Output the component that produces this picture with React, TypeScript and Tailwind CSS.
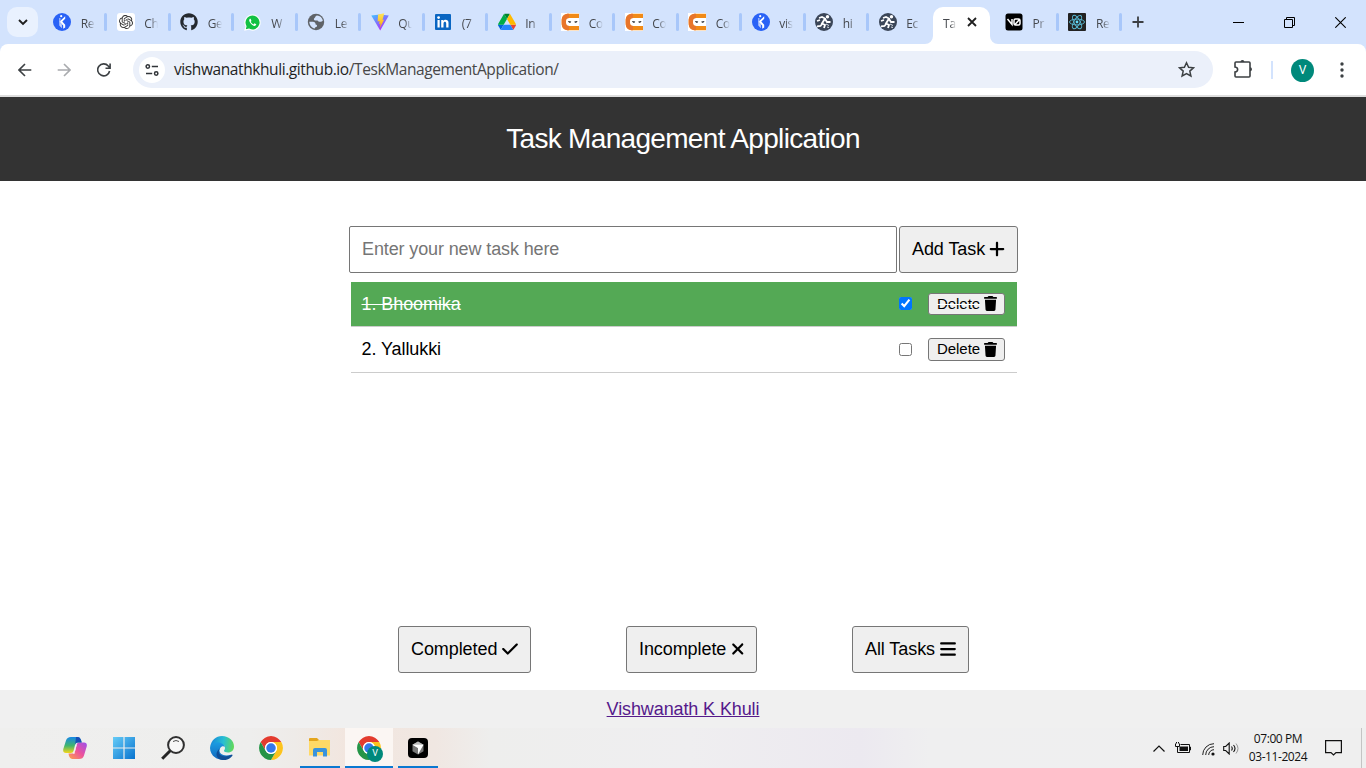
import React from "react";
import { FaBars, FaCheck, FaPlus, FaTrash, FaXmark, FaGithub, FaWhatsapp } from "react-icons/fa6";
import { SiOpenai } from "react-icons/si";

function BlueFigure() {
  return (
    <svg className="size-[18px]" viewBox="0 0 18 18">
      <circle cx="9" cy="9" r="9" fill="#2962f6" />
      <circle cx="8.200" cy="3.200" r="1.100" fill="#fff" />
      <path d="M12.200 3.200v2.500L9.300 8.600l2.900 3.200v2.600l-2 1.400v-3.300L6.400 8.700Z" fill="#fff" />
      <path d="M6.300 5v7.500l2.600 2.800v-3.700l-1.500-1.500V5Z" fill="#bfd0fd" />
    </svg>
  );
}

function OpenAiIcon() {
  return (
    <span className="flex size-[18px] items-center justify-center rounded-[3px] bg-white text-[#333]">
      <SiOpenai size={14} />
    </span>
  );
}

function WhatsappIcon() {
  return (
    <span className="flex size-[18px] items-center justify-center">
      <svg className="size-[17px]" viewBox="0 0 18 18">
        <path d="M9 1a8 8 0 1 1-3.800 15L1 17l1.100-4A8 8 0 0 1 9 1Z" fill="#12c143" stroke="#fff" strokeWidth="1.200" />
        <path d="M6.200 5c-1 .8-1 2.200.2 4 1.600 2.400 3.300 3.600 4.800 3.600 1 0 1.800-.8 1.800-1.700l-2-1-1 1.100C8.600 10.400 7.700 9.500 7.100 8.300l.8-1L7 5Z" fill="#fff" />
      </svg>
    </span>
  );
}

function GlobeIcon() {
  return (
    <svg className="size-[18px]" viewBox="0 0 18 18">
      <circle cx="9" cy="9" r="8.200" fill="#5f6368" />
      <path d="M10 2.500c-2 .5-1.500 1.800-2.500 2.500s-.8 2.500.8 2.500h2.200c.8 1.200 1.800 1.500 3.500 1.200.8-.3 1.500-.5 1.800-1C15.500 5 13 2.600 10 2.500Z" fill="#d3e3fd" />
      <path d="M2.300 8.800h3.600c1.800 0 2.700 1 2.700 2.600 1.400.3 1.800 1.200 1.200 2.200-.7.700-1.900.5-2 1.900C4.800 15 2.500 12.500 2.300 8.800Z" fill="#d3e3fd" />
    </svg>
  );
}

function ViteIcon() {
  return (
    <svg className="size-[18px]" viewBox="0 0 18 18">
      <defs>
        <linearGradient id="vite-a" x1="0" y1="0" x2="0.6" y2="1">
          <stop offset="0" stopColor="#41c5ff" />
          <stop offset="1" stopColor="#b52bfd" />
        </linearGradient>
        <linearGradient id="vite-b" x1="0" y1="0" x2="0" y2="1">
          <stop offset="0" stopColor="#ffe45a" />
          <stop offset="1" stopColor="#ffa800" />
        </linearGradient>
      </defs>
      <path d="M.3 2.500 9 1.500l8.800 1L9.200 17.600Z" fill="url(#vite-a)" />
      <path d="m13.300.3-6.200 1.200-.5 6.900 2-.4-.5 3 1.500-.4-.8 4.500 4.400-8.500-1.700.3Z" fill="url(#vite-b)" />
    </svg>
  );
}

function LinkedinIcon() {
  return (
    <svg className="size-[18px]" viewBox="0 0 18 18">
      <rect x="1" y="1" width="16" height="16" rx="1" fill="#0a66c2" />
      <circle cx="4.600" cy="4.600" r="1.400" fill="#fff" />
      <path d="M3.500 7h2.200v7.500H3.500zM7.200 7h2.100v1c1.100-1.800 5.200-1.800 5.200 1.800v4.700h-2.300v-4.100c0-2.200-2.700-2-2.700 0v4.100H7.200Z" fill="#fff" />
    </svg>
  );
}

function DriveIcon() {
  return (
    <svg className="size-[18px]" viewBox="0 0 87.3 87.3">
      <g transform="translate(0 4)">
        <path d="m6.600 66.850 3.850 6.650c.8 1.400 1.950 2.500 3.300 3.300l13.750-23.800H0c0 1.550.4 3.100 1.200 4.500Z" fill="#0066da" />
        <path d="M43.650 25 29.900 1.200c-1.350.8-2.500 1.900-3.300 3.300L1.200 48.500A9 9 0 0 0 0 53h27.500Z" fill="#00ac47" />
        <path d="M73.550 76.800c1.350-.8 2.500-1.900 3.300-3.300l9.250-16c.8-1.400 1.200-2.950 1.200-4.500H59.800Z" fill="#ea4335" />
        <path d="M43.650 25 57.400 1.200C56.050.4 54.500 0 52.900 0H34.400c-1.600 0-3.150.45-4.500 1.200Z" fill="#00832d" />
        <path d="M59.800 53H27.500L13.750 76.800c1.350.8 2.900 1.200 4.500 1.200h50.800c1.600 0 3.150-.45 4.500-1.200Z" fill="#2684fc" />
        <path d="m73.400 26.500-12.700-22c-.8-1.400-1.950-2.500-3.300-3.300L43.650 25 59.800 53h27.450c0-1.550-.4-3.100-1.200-4.500Z" fill="#ffba00" />
      </g>
    </svg>
  );
}

function CodingNinjasIcon() {
  return (
    <svg className="size-[18px]" viewBox="0 0 18 18">
      <path d="M0 0h18v18H0z" fill="#fff" />
      <path d="M18 .7H8C3 .7.700 3 .700 8v2c0 5 2.300 7.300 7.300 7.300h10V13H8.500C6 13 5 12 5 9.800V8c0-2.200 1-3 3.500-3H18Z" fill="#f18a16" />
      <path d="M.7 8C.7 3 3 .7 8 .7v4.300C5.900 5.200 5 6 5 8v2c0 2 1 3 3 3v4.300C3 17.300.700 15 .700 10Z" fill="#e8752b" />
      <path d="m7 8 3.200.5c-.3 1.700-2.500 1.900-3.200-.5Zm9.500 0-3.200.5c.3 1.700 2.500 1.900 3.200-.5Z" fill="#25292f" />
    </svg>
  );
}

function RunnerIcon() {
  return (
    <svg className="size-[18px]" viewBox="0 0 18 18">
      <circle cx="9" cy="9" r="9" fill="#3b4658" />
      <circle cx="12.500" cy="3.800" r="1.700" fill="#fff" />
      <path d="m4 5 3-1 3 1.500-3 5 3 1.500-1 3M7.500 10.500 5.500 13l-3.500.3M10 6l2 3h3.500M2 8l3-1" fill="none" stroke="#fff" strokeWidth="1.800" />
      <path d="m11 11 3 1.500M12 14l2 .5" stroke="#d8dde4" />
    </svg>
  );
}

function V0Icon() {
  return (
    <svg className="size-[18px]" viewBox="0 0 18 18">
      <rect x=".5" y=".5" width="17" height="17" rx="2.500" fill="#000" />
      <path d="m2.500 6 4.500 5.500V6M9 7.500v3q0 1.500 1.500 1.500h3q1.500 0 1.500-1.500v-3q0-1.500-1.500-1.500h-3Q9 6 9 7.500ZM10 11.500l4.500-5" fill="none" stroke="#fff" strokeWidth="1.500" />
    </svg>
  );
}

function ReactLogo() {
  return (
    <svg className="size-[18px]" viewBox="0 0 18 18">
      <rect width="18" height="18" rx="1" fill="#222" />
      <g fill="none" stroke="#58b9d3" strokeWidth=".9">
        <ellipse cx="9" cy="9" rx="7.500" ry="2.900" />
        <ellipse cx="9" cy="9" rx="7.500" ry="2.900" transform="rotate(60 9 9)" />
        <ellipse cx="9" cy="9" rx="7.500" ry="2.900" transform="rotate(120 9 9)" />
      </g>
      <circle cx="9" cy="9" r="1.400" fill="#61dafb" />
    </svg>
  );
}

const tabsBefore: { icon: React.ReactNode; label: string }[] = [
  { icon: <BlueFigure />, label: "Re" },
  { icon: <OpenAiIcon />, label: "Ch" },
  { icon: <FaGithub size={18} color="#24292f" />, label: "Ge" },
  { icon: <WhatsappIcon />, label: "W" },
  { icon: <GlobeIcon />, label: "Le" },
  { icon: <ViteIcon />, label: "Qu" },
  { icon: <LinkedinIcon />, label: "(7" },
  { icon: <DriveIcon />, label: "In" },
  { icon: <CodingNinjasIcon />, label: "Co" },
  { icon: <CodingNinjasIcon />, label: "Co" },
  { icon: <CodingNinjasIcon />, label: "Co" },
  { icon: <BlueFigure />, label: "vis" },
  { icon: <RunnerIcon />, label: "hi" },
  { icon: <RunnerIcon />, label: "Ec" },
];

const tabsAfter: { icon: React.ReactNode; label: string }[] = [
  { icon: <V0Icon />, label: "Pr" },
  { icon: <ReactLogo />, label: "Re" },
];

function Tab({ icon, label, divider = true }: { icon: React.ReactNode; label: string; divider?: boolean }) {
  return (
    <div className="flex h-full w-[63.5px] shrink-0 items-center">
      <span className="flex w-[18px] shrink-0">{icon}</span>
      <span className="ml-[9.5px] w-[14px] shrink-0 pt-[3px] text-xs tracking-[-0.3px] whitespace-nowrap text-[#45484d] [mask-image:linear-gradient(to_right,#000_45%,transparent)]">
        {label}
      </span>
      <span className={divider ? "ml-[9.5px] h-[18px] w-[3px] shrink-0 rounded-full bg-[#a8c7fa]" : "hidden"} />
    </div>
  );
}

function TabStrip() {
  return (
    <div className="flex h-11 shrink-0 items-center bg-[#d3e3fd]">
      <div className="ml-[7px] flex h-[30px] w-[31px] shrink-0 items-center justify-center rounded-[10px] bg-[#e9f1fe]">
        <svg className="size-3" viewBox="0 0 12 12">
          <path d="m2 4 4 4 4-4" fill="none" stroke="#1f1f1f" strokeWidth="1.900" />
        </svg>
      </div>
      <div className="ml-[15.200px] flex h-full w-[879.800px] items-center">
        {tabsBefore.map((t, i) => (
          <Tab key={i} icon={t.icon} label={t.label} divider={i < tabsBefore.length - 1} />
        ))}
      </div>
      <div className="relative mt-[7px] flex h-[37px] w-[57px] shrink-0 items-center rounded-t-[10px] bg-white pl-[10px]">
        <svg className="absolute bottom-0 -left-2 size-2" viewBox="0 0 8 8">
          <path d="M8 0v8H0a8 8 0 0 0 8-8" fill="#fff" />
        </svg>
        <svg className="absolute -right-2 bottom-0 size-2" viewBox="0 0 8 8">
          <path d="M0 0v8h8a8 8 0 0 1-8-8" fill="#fff" />
        </svg>
        <span className="-mt-1 w-[13px] text-xs whitespace-nowrap text-[#45484d] [mask-image:linear-gradient(to_right,#000_60%,transparent)]">Ta</span>
        <svg className="-mt-[7px] ml-[11px] size-[10px]" viewBox="0 0 10 10">
          <path d="m1 1 8 8M9 1 1 9" stroke="#1f1f1f" strokeWidth="1.800" />
        </svg>
      </div>
      <div className="ml-[15px] flex h-full w-[127px] items-center">
        {tabsAfter.map((t, i) => (
          <Tab key={i} icon={t.icon} label={t.label} />
        ))}
      </div>
      <svg className="size-3 shrink-0" viewBox="0 0 12 12">
        <path d="M6 .5v11M.5 6h11" stroke="#3c3f43" strokeWidth="1.800" />
      </svg>
      <div className="ml-auto flex items-center gap-10 pr-5">
        <svg className="h-[11px] w-[11px]" viewBox="0 0 11 11" shapeRendering="crispEdges">
          <path d="M0 5.500h11" stroke="#000" />
        </svg>
        <svg className="h-[11px] w-[11px]" viewBox="0 0 11 11">
          <path d="M.5 2.500h8v8h-8zM2.500 2.500v-2h8v8h-2" fill="none" stroke="#000" />
        </svg>
        <svg className="h-[11px] w-[11px]" viewBox="0 0 11 11">
          <path d="m.3.300 10.400 10.400M10.700.300.300 10.700" stroke="#000" strokeWidth="1.100" />
        </svg>
      </div>
    </div>
  );
}

function Toolbar() {
  return (
    <div className="flex h-[53px] shrink-0 bg-[#d3e3fd]">
      <div className="flex w-full items-center rounded-t-lg border-b-2 border-[#dedede] bg-white">
        <svg className="ml-[18px] size-[14px]" viewBox="0 0 14 14">
          <path d="M13.300 7H1M7 1 1 7l6 6" fill="none" stroke="#3c4043" strokeWidth="1.600" />
        </svg>
        <svg className="ml-[25px] size-[14px]" viewBox="0 0 14 14">
          <path d="M.7 7H13M7 1l6 6-6 6" fill="none" stroke="#a9abae" strokeWidth="1.600" />
        </svg>
        <svg className="ml-[26px] size-[14px]" viewBox="0 0 14 14">
          <path d="M12.600 8A6 6 0 1 1 11.300 3L13 4.900M13.100.6v4.700H8.500" fill="none" stroke="#3c4043" strokeWidth="1.600" />
        </svg>
        <div className="ml-[22px] flex h-[37px] w-[1080px] items-center rounded-full bg-[#ebf0fa]">
          <div className="ml-[6px] flex size-[26px] items-center justify-center rounded-full bg-white">
            <svg className="h-3 w-[14px]" viewBox="0 0 14 12">
              <g fill="none" stroke="#303438" strokeWidth="1.500">
                <circle cx="2.800" cy="2.500" r="1.700" />
                <path d="M6.800 2.500H13M1 9.500h6.200" />
                <circle cx="11.200" cy="9.500" r="1.700" />
              </g>
            </svg>
          </div>
          <span className="ml-[9px] text-[15.500px] leading-none tracking-[-0.410px] whitespace-nowrap text-[#474747]">
            <span className="text-[#1f1f1f]">vishwanathkhuli.github.io</span>/TeskManagementApplication/
          </span>
          <svg className="mr-[18px] ml-auto size-[17px]" viewBox="0 0 17 17">
            <path d="m8.500 1.800 2.100 4.500 4.900.5-3.700 3.300 1.100 4.900-4.400-2.500-4.400 2.500 1.100-4.900-3.700-3.300 4.900-.5Z" fill="none" stroke="#3c4043" strokeWidth="1.500" />
          </svg>
        </div>
        <svg className="-mt-px ml-5 size-[20px]" viewBox="0 0 20 20">
          <path d="M3 3h13q1 0 1 1v13q0 1-1 1H3q-1 0-1-1v-4c3.500-.5 3.500-4.500 0-5V4q0-1 1-1Z" fill="none" stroke="#3c4043" strokeWidth="1.600" />
          <path d="M7.400 3a2 2 0 0 1 4 0M17 8.300a2 2 0 0 1 0 4" fill="#3c4043" />
        </svg>
        <span className="ml-[18px] h-[18px] w-[2px] bg-[#d3e3fd]" />
        <span className="mt-px ml-[18px] flex size-[23px] items-center justify-center rounded-full bg-[#00897b] font-['Roboto',sans-serif] text-xs text-white">V</span>
        <svg className="ml-[24px] h-4 w-4" viewBox="0 0 16 16">
          <g fill="#3c4043">
            <circle cx="4" cy="2" r="1.700" />
            <circle cx="4" cy="8" r="1.700" />
            <circle cx="4" cy="14" r="1.700" />
          </g>
        </svg>
      </div>
    </div>
  );
}

const buttonClass =
  "flex h-[47px] items-center justify-between rounded-[3px] border border-[#767676] bg-[#efefef] px-3 text-[18px] tracking-[-0.080px] text-black whitespace-nowrap";

function TaskRow({ text, done }: { text: string; done: boolean }) {
  return (
    <li
      className={
        done
          ? "flex h-[45px] items-center border-b border-[#ccc] bg-[#54a955] pr-3 pl-[10.5px] text-white line-through"
          : "flex h-[46px] items-center border-b border-[#ccc] pr-3 pl-[10.5px] text-black"
      }
    >
      <span className="text-[18px] tracking-[-0.080px]">{text}</span>
      <input type="checkbox" defaultChecked={done} className="mr-[16px] mb-px ml-auto size-[13px]" />
      <button
        className={
          (done ? "h-[22px]" : "h-[23px]") +
          " flex w-[77px] items-center justify-between rounded-[3px] border border-[#767676] bg-[#efefef] pr-[7px] pl-2 text-[15px] tracking-[-0.050px] text-black"
        }
      >
        <span className={done ? "line-through decoration-white" : ""}>Delete</span>
        <FaTrash className="mb-px h-[15px] w-[13px]" />
      </button>
    </li>
  );
}

function TaskApp() {
  return (
    <div className="flex h-[631px] shrink-0 flex-col bg-white font-['Liberation_Sans',Arial,sans-serif]">
      <header className="flex h-[84px] items-center justify-center bg-[#333] text-[28px] tracking-[-0.680px] text-white">
        Task Management Application
      </header>
      <main className="flex flex-1 flex-col">
        <div className="mt-[45px] ml-[349px] flex gap-[2px]">
          <input
            placeholder="Enter your new task here"
            className="h-[47px] w-[548px] rounded-[2px] border border-[#767676] px-3 text-[18px] tracking-[-0.120px] placeholder:text-[#757575]"
          />
          <button className={buttonClass + " w-[119px]"}>
            Add Task <FaPlus className="mb-[2px] h-[18px] w-[16px] shrink-0" />
          </button>
        </div>
        <ul className="mt-[9px] ml-[351px] w-[666px]">
          <TaskRow text="1. Bhoomika" done />
          <TaskRow text="2. Yallukki" done={false} />
        </ul>
        <div className="mt-auto mb-[17px] flex gap-[95px] pl-[398px]">
          <button className={buttonClass + " w-[133px]"}>
            Completed <FaCheck className="mb-[2px] h-[18px] w-[16px] shrink-0" />
          </button>
          <button className={buttonClass + " w-[131px]"}>
            Incomplete <FaXmark className="mb-[2px] h-[18px] w-[13.5px] shrink-0" />
          </button>
          <button className={buttonClass + " w-[117px]"}>
            All Tasks <FaBars className="mb-[2px] h-[18px] w-[16px] shrink-0" />
          </button>
        </div>
      </main>
      <footer className="flex h-[38px] items-center justify-center bg-[#f0f0f0] text-[18px] tracking-[-0.110px]">
        <a href="#" className="text-[#551a8b] underline">Vishwanath K Khuli</a>
      </footer>
    </div>
  );
}

function CopilotIcon() {
  return (
    <svg className="size-[24px]" viewBox="0 0 24 24">
      <defs>
        <linearGradient id="cop-a" x1="0" y1="0" x2="0" y2="1">
          <stop offset="0" stopColor="#1688e8" />
          <stop offset=".55" stopColor="#42b66b" />
          <stop offset="1" stopColor="#f6d619" />
        </linearGradient>
        <linearGradient id="cop-b" x1="1" y1="0" x2="0" y2="1">
          <stop offset="0" stopColor="#9b50ed" />
          <stop offset=".5" stopColor="#ec529d" />
          <stop offset="1" stopColor="#ffa347" />
        </linearGradient>
      </defs>
      <path d="M8 1h7q2 0 3 3l.7 2.500h-4q-2 0-2.700 2.500l-1.500 6q-.5 2-2.500 2H3q-3.500 0-2.700-4L3 4.500Q4 1 8 1Z" fill="url(#cop-a)" />
      <path d="M16 23H9q-2 0-3-3l-.5-2.500h3.800q2 0 2.700-2.500l1.500-6q.5-2.500 2.500-2.500h5q3.500 0 2.700 4L21 19.500Q20 23 16 23Z" fill="url(#cop-b)" />
      <path d="M13 1h2q2 0 3 3l.7 2.500h-4q-1.700 0-2.500 2Z" fill="#174fb7" />
      <path d="m14 8-2.700 10H9.500q1.500-.5 2-2.500l1.500-6Z" fill="#fff" />
    </svg>
  );
}

function WindowsIcon() {
  return (
    <svg className="size-[22px]" viewBox="0 0 22 22">
      <defs>
        <linearGradient id="win-a" x1="0" y1="0" x2="1" y2="1">
          <stop offset="0" stopColor="#66ccf7" />
          <stop offset="1" stopColor="#0873cf" />
        </linearGradient>
      </defs>
      <path d="M0 0h10.400v10.400H0zM11.600 0H22v10.400H11.600zM0 11.600h10.400V22H0zM11.600 11.600H22V22H11.600z" fill="url(#win-a)" />
    </svg>
  );
}

function SearchIcon() {
  return (
    <svg className="size-[24px]" viewBox="0 0 24 24">
      <circle cx="15" cy="9" r="7.900" fill="#f7f7f7" stroke="#303030" strokeWidth="2" />
      <path d="m9.200 14.800-8 8" stroke="#252525" strokeWidth="3" />
      <path d="M12 5.500q3-2 6 0" fill="none" stroke="#505050" strokeWidth="1" />
    </svg>
  );
}

function EdgeIcon() {
  return (
    <svg className="size-[24px]" viewBox="0 0 24 24">
      <defs>
        <linearGradient id="edge-a" x1="0" y1=".4" x2="1" y2=".5">
          <stop offset="0" stopColor="#1687d9" />
          <stop offset=".55" stopColor="#28bfd3" />
          <stop offset="1" stopColor="#62d957" />
        </linearGradient>
        <linearGradient id="edge-b" x1="0" y1="0" x2="0" y2="1">
          <stop offset="0" stopColor="#1b9de2" />
          <stop offset="1" stopColor="#1267bd" />
        </linearGradient>
      </defs>
      <path d="M.1 11.200C1.200 4.300 6 0 12 0c7.200 0 12 5.200 12 10.500 0 3.700-2.600 6-6 6-2.500 0-4-.8-4-1.700 0-.6 1-1 1-2.800 0-2.300-2.200-4.500-6-4.500-4 0-7.500 1.500-8.900 3.700Z" fill="url(#edge-a)" />
      <path d="M.1 11.200C1.500 7 5.500 5.600 9.500 6.500c3 .7 4.800 2.500 5.400 4.400-1.200-1.100-3.500-1-4.600 1-2.700 4.800 2 9.700 11.700 6.500-4 6-11.800 6.800-16.800 3.200C1.500 19-.3 15 .1 11.200Z" fill="url(#edge-b)" />
      <path d="M9.900 12.500c-3.800 5 2.500 10.500 11.300 6.500 1.300-.7 1.700.1 1 .9-3.200 4.200-8.300 5.100-12 3.500-5-2.200-4.800-7.900-.3-10.900Z" fill="#104d95" />
    </svg>
  );
}

function ChromeIcon() {
  return (
    <svg className="size-[24px]" viewBox="0 0 48 48">
      <circle cx="24" cy="24" r="23.900" fill="#fff" />
      <path d="M3.300 12a24 24 0 0 1 41.400 0H24a12 12 0 0 0-10.400 18Z" fill="#e33b2e" />
      <path d="M44.700 12A24 24 0 0 1 24 48l10.400-18A12 12 0 0 0 24 12Z" fill="#fcc31e" />
      <path d="M24 48A24 24 0 0 1 3.300 12l10.300 18A12 12 0 0 0 34.400 30Z" fill="#269447" />
      <circle cx="24" cy="24" r="12" fill="#fff" />
      <circle cx="24" cy="24" r="9.500" fill="#3478eb" />
    </svg>
  );
}

function FolderIcon() {
  return (
    <svg className="h-[20px] w-[22px]" viewBox="0 0 22 20">
      <path d="M0 1q0-1 1-1h7l2 2h10q1 0 1 1v14H0Z" fill="#e4a51d" />
      <path d="M0 3h8l2-1h11v15.500H0Z" fill="#ffd966" />
      <path d="M4 18.500V12q0-2 2-2h10q2 0 2 2v6.500h-4V14H8v4.500Z" fill="#3a93dc" />
    </svg>
  );
}

function CubeIcon() {
  return (
    <svg className="size-[20px]" viewBox="0 0 20 20">
      <rect width="20" height="20" rx="4" fill="#000" />
      <path d="m10 3.500 5.500 3.200v6.600L10 16.500l-5.500-3.200V6.700Z" fill="#777" />
      <path d="m10 3.500 5.500 3.200L10 9.900 4.500 6.700Z" fill="#bbb" />
      <path d="M4.500 6.700h11L10 16.500V10Z" fill="#fff" />
    </svg>
  );
}

function Taskbar() {
  return (
    <div className="flex h-10 shrink-0 bg-[linear-gradient(to_right,#efefee_0px,#eeeeed_250px,#eeebe8_295px,#f2e6df_345px,#f0e7e2_435px,#eeeeed_490px,#efeef0_690px,#ece9f0_860px,#efeff0_930px,#efefef_1366px)]">
      <div className="ml-[63px] flex items-center gap-[25px]">
        <CopilotIcon />
        <span className="flex w-6 justify-center"><WindowsIcon /></span>
        <SearchIcon />
        <EdgeIcon />
        <ChromeIcon />
      </div>
      <div className="ml-[17px] flex h-full w-10 items-center justify-center border-b-2 border-[#0a78d1] pt-[2px]">
        <FolderIcon />
      </div>
      <div className="relative ml-[5px] flex h-full w-12 items-center justify-center border-b-2 border-[#0a78d1] bg-[#fbf6f3] pt-px">
        <ChromeIcon />
        <span className="absolute top-[18px] left-[22px] flex size-4 items-center justify-center rounded-full bg-[#00897b] font-['Roboto',sans-serif] text-[9px] text-white">V</span>
      </div>
      <div className="ml-[5px] flex h-full w-10 items-center justify-center border-b-2 border-[#0a78d1] pt-[2px]">
        <CubeIcon />
      </div>
      <div className="ml-auto flex h-full items-center">
        <svg className="h-[7px] w-3" viewBox="0 0 12 7">
          <path d="m.5 6.500 5.500-5.500 5.500 5.500" fill="none" stroke="#111" strokeWidth="1.200" />
        </svg>
        <svg className="ml-[10px] h-[12px] w-[16px]" viewBox="0 0 16 12">
          <path d="M.5 1.500v3h4v-3M1.500 0v1.500M3.500 0v1.500M2.500 4.500v6h12v-8h-9M15 5h.5v3H15" fill="none" stroke="#111" />
          <path d="M4.500 4.500h8.500V9H4.500z" fill="#111" />
        </svg>
        <svg className="mt-[2px] ml-[11px] size-[13px]" viewBox="0 0 13 13">
          <g fill="none" stroke="#222" strokeWidth="1">
            <path d="M.7 12A11.300 11.300 0 0 1 12 .7M3.700 12A8.300 8.300 0 0 1 12 3.700M6.700 12A5.300 5.300 0 0 1 12 6.700" />
          </g>
          <circle cx="11" cy="11" r="1.600" fill="#111" />
        </svg>
        <svg className="ml-[8px] h-[13px] w-[17px]" viewBox="0 0 17 13">
          <path d="M.7 4.500h2L6.200 1v11L2.700 8.500h-2ZM8.500 4.500q1.500 2 0 4M10.500 3q3 3.500 0 7" fill="none" stroke="#111" strokeWidth="1.100" />
          <path d="M13 1.500q4 5 0 10" fill="none" stroke="#999" />
        </svg>
        <div className="ml-[8px] w-[60px] text-center text-[12px] leading-[18px] tracking-[-0.42px] whitespace-nowrap text-[#111]">
          <div>07:00 PM</div>
          <div>03-11-2024</div>
        </div>
        <svg className="ml-[17px] h-[16px] w-[17px]" viewBox="0 0 17 16">
          <path d="M.6.600h15.800v12H11L8.500 15 6 12.600H.6Z" fill="none" stroke="#111" strokeWidth="1.200" />
        </svg>
        <span className="mr-1 ml-[19px] h-full w-px bg-[#c4c4c4]" />
      </div>
    </div>
  );
}

export default function App() {
  return (
    <div className="flex h-[768px] w-[1366px] flex-col overflow-hidden font-['Open_Sans','Noto_Sans',sans-serif]">
      <TabStrip />
      <Toolbar />
      <TaskApp />
      <Taskbar />
    </div>
  );
}
